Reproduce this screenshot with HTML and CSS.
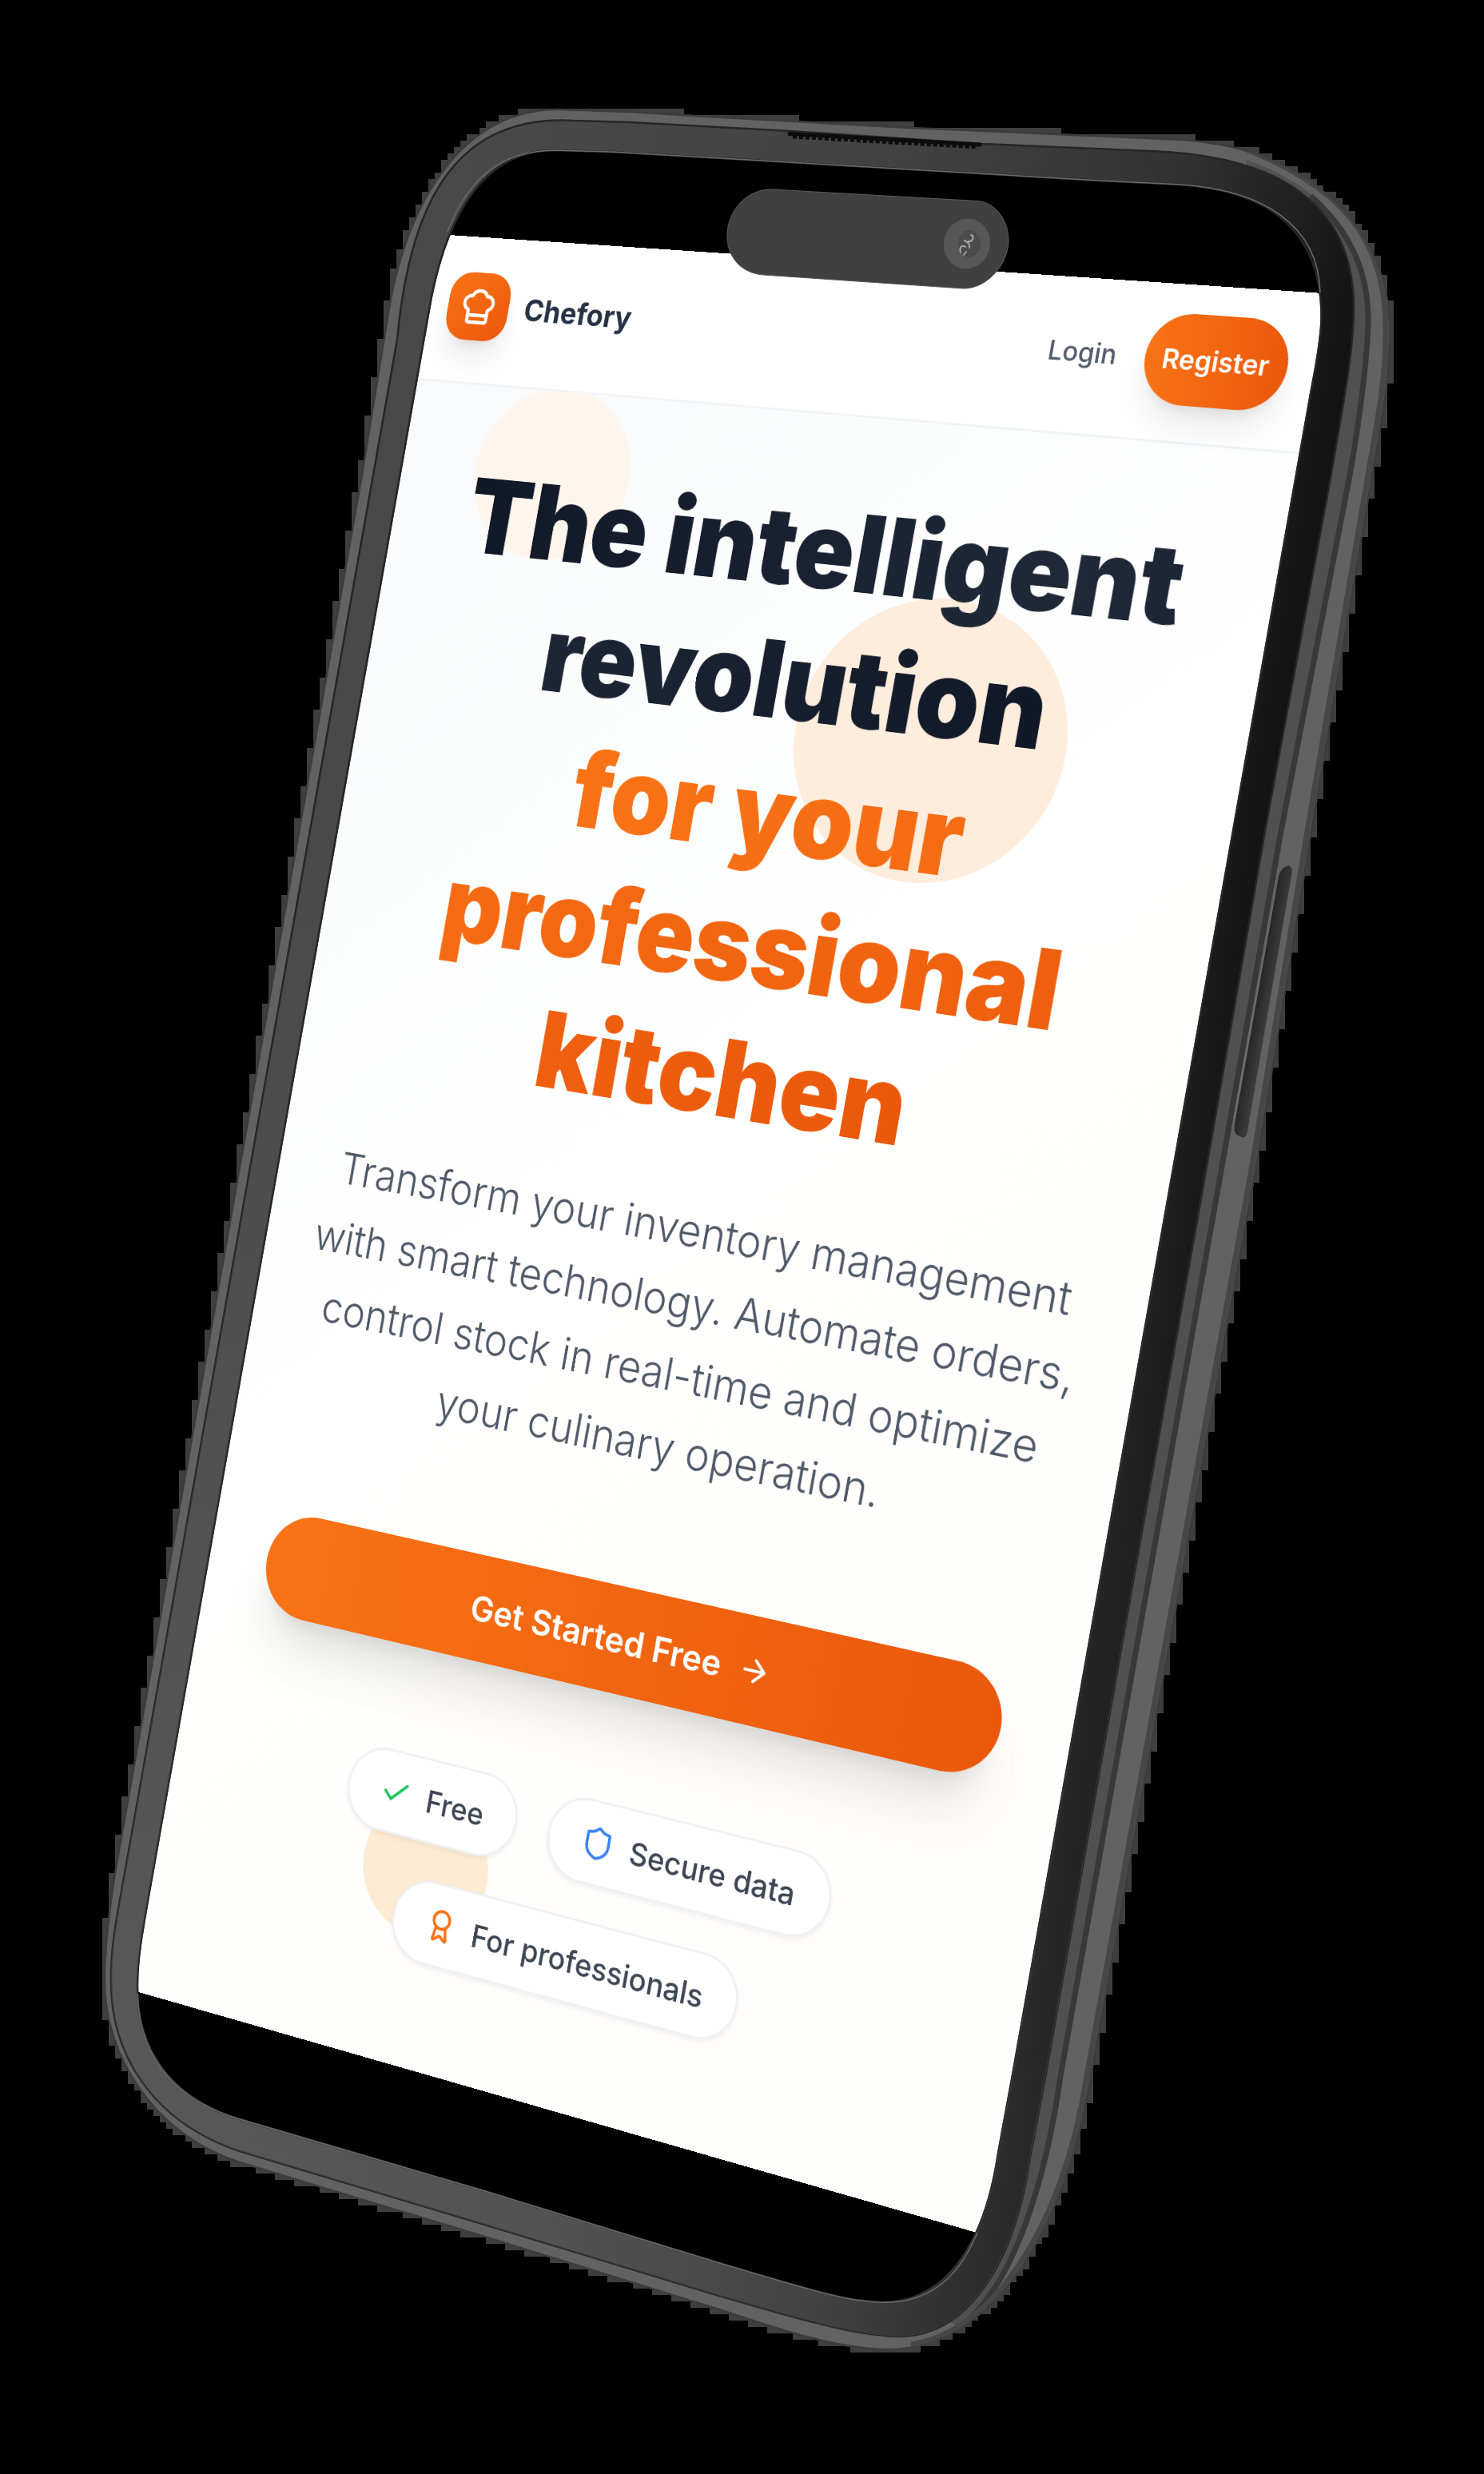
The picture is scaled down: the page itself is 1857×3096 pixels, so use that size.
FILE: index.html
```html
<!DOCTYPE html>
<html lang="en">
<head>
<meta charset="utf-8">
<title>Chefory</title>
<link rel="stylesheet" href="styles.css">
</head>
<body>
<main class="stage">
  <div class="screen">
    <header class="nav">
      <div class="brand">
        <span class="brand-mark">
          <svg class="icon-hat" viewBox="0 0 24 24"><path d="M17 21a1 1 0 0 0 1-1v-5.35c0-.457.316-.844.727-1.041a4 4 0 0 0-2.134-7.589 5 5 0 0 0-9.186 0 4 4 0 0 0-2.134 7.588c.411.198.727.585.727 1.041V20a1 1 0 0 0 1 1Z"/><path d="M6 17h12"/></svg>
        </span>
        <span class="brand-name">Chefory</span>
      </div>
      <nav class="actions">
        <a class="login">Login</a>
        <a class="register">Register</a>
      </nav>
    </header>
    <section class="hero">
      <i class="blob blob-a"></i>
      <i class="blob blob-b"></i>
      <i class="blob blob-c"></i>
      <h1 class="title"><span class="ink">The intelligent<br>revolution</span><br><span class="flame">for your<br>professional<br>kitchen</span></h1>
      <p class="lead">Transform your inventory management<br>with smart technology. Automate orders,<br>control stock in real-time and optimize<br>your culinary operation.</p>
      <a class="cta">Get Started Free
        <svg class="icon" viewBox="0 0 24 24"><path d="M5 12h14"/><path d="m12 5 7 7-7 7"/></svg>
      </a>
      <ul class="pills">
        <li class="pill"><svg class="icon green" viewBox="0 0 24 24"><path d="M20 6 9 17l-5-5"/></svg>Free</li>
        <li class="pill"><svg class="icon blue" viewBox="0 0 24 24"><path d="M20 13c0 5-3.500 7.500-7.660 8.950a1 1 0 0 1-.670-.010C7.500 20.500 4 18 4 13V6a1 1 0 0 1 1-1c2 0 4.500-1.200 6.240-2.720a1.170 1.170 0 0 1 1.520 0C14.510 3.810 17 5 19 5a1 1 0 0 1 1 1z"/></svg>Secure data</li>
        <li class="pill"><svg class="icon orange" viewBox="0 0 24 24"><path d="m15.477 12.890 1.515 8.526a.5.5 0 0 1-.810.470l-3.580-2.687a1 1 0 0 0-1.197 0l-3.586 2.686a.5.5 0 0 1-.810-.469l1.514-8.526"/><circle cx="12" cy="8" r="6"/></svg>For professionals</li>
      </ul>
    </section>
  </div>

  <svg class="phone" viewBox="0 0 1857 3096">
    <defs>
      <linearGradient id="bezel" gradientUnits="userSpaceOnUse" x1="587" y1="104" x2="1712" y2="303">
        <stop offset="0" stop-color="#494949"/>
        <stop offset=".5" stop-color="#414141"/>
        <stop offset=".78" stop-color="#323232"/>
        <stop offset=".93" stop-color="#1e1e1e"/>
        <stop offset="1" stop-color="#131313"/>
      </linearGradient>
      <linearGradient id="lift" gradientUnits="userSpaceOnUse" x1="0" y1="1000" x2="0" y2="2700">
        <stop offset="0" stop-color="#fff" stop-opacity="0"/>
        <stop offset="1" stop-color="#fff" stop-opacity=".09"/>
      </linearGradient>
      <linearGradient id="key" gradientUnits="userSpaceOnUse" x1="1570" y1="1250" x2="1592" y2="1254">
        <stop offset="0" stop-color="#222"/>
        <stop offset="1" stop-color="#404040"/>
      </linearGradient>
      <clipPath id="bodyClip"><path d="M452 600L484.600 400C505 260 575 136 700 137L788 140L886 146L1140 160L1368 170L1480 175C1640 185 1738 290 1739 410C1740 470 1730 520 1716 600L1641 1040L1571.700 1460L1364.700 2600C1330 2810 1230 2945 1103 2940C1040 2938 960 2910 900 2890L600 2797L300 2706C190 2670 131 2570 131 2480C130 2440 137 2390 143 2350Z"/></clipPath>
    </defs>
    <g id="fringe"></g>
    <path class="rim" d="M452 600L484.600 400C505 260 575 136 700 137L788 140L886 146L1140 160L1368 170L1480 175C1640 185 1738 290 1739 410C1740 470 1730 520 1716 600L1641 1040L1571.700 1460L1364.700 2600C1330 2810 1230 2945 1103 2940C1040 2938 960 2910 900 2890L600 2797L300 2706C190 2670 131 2570 131 2480C130 2440 137 2390 143 2350Z
      M190 2350L536 393C552 296 592 186 696 188L766 190L1140 212L1377 226L1460 230C1585 234 1654 285 1653.600 398C1653 430 1645 465 1640 493L1266.500 2600L1249 2695C1232 2810 1180 2896 1078 2879C1050 2876 1000 2862 900 2832L600 2740L300 2652C210 2625 172 2560 172 2490C171 2455 178 2417 190 2350Z"/>
    <g clip-path="url(#bodyClip)">
      <path class="channel" d="M1560 200C1670 240 1714 310 1714 400C1714 440 1703 530 1691 600L1606 1040L1532 1460L1329.700 2600C1310 2740 1270 2850 1200 2912L1168 2895C1235 2850 1262 2760 1290 2600L1563 1040L1643 600C1660 520 1673 440 1673 390C1672 300 1630 240 1560 212Z"/>
      <path class="channel-line" d="M1640 245C1690 290 1712 340 1712 400C1712 440 1701 530 1688 600L1603 1040L1529 1460L1326.700 2600C1307 2740 1267 2850 1215 2900"/>
      <path class="rim-edge" d="M1560 187C1680 235 1734 300 1734 410C1735 470 1725 520 1711 600L1636 1040L1566.700 1460L1359.700 2600C1330 2790 1240 2920 1140 2934"/>
    </g>
    <path class="key-hi" d="M1601 1095L1544 1400"/>
    <path class="key" d="M1600 1097C1602 1088 1609 1082 1614 1084C1618 1086 1617 1091 1616 1096L1562 1410C1561 1424 1556 1425 1552 1422C1545 1420 1544 1416 1545 1407Z"/>
    <path class="glass" d="M497 425C512 262 565 142 718 151L788 153L989 164L1229 180L1440 189C1600 195 1694 255 1694 385C1694 440 1680 510 1664.700 600L1583 1040L1510 1460L1308 2600L1289 2700C1270 2830 1210 2940 1100 2922C1050 2918 960 2890 900 2873L600 2782L300 2692C190 2655 139 2570 139 2480C138 2440 146 2400 155 2350L466 600Z
      M190 2350L536 393C552 296 592 186 696 188L766 190L1140 212L1377 226L1460 230C1585 234 1654 285 1653.600 398C1653 430 1645 465 1640 493L1266.500 2600L1249 2695C1232 2810 1180 2896 1078 2879C1050 2876 1000 2862 900 2832L600 2740L300 2652C210 2625 172 2560 172 2490C171 2455 178 2417 190 2350Z"/>
    <path class="lift" d="M497 425C512 262 565 142 718 151L788 153L989 164L1229 180L1440 189C1600 195 1694 255 1694 385C1694 440 1680 510 1664.700 600L1583 1040L1510 1460L1308 2600L1289 2700C1270 2830 1210 2940 1100 2922C1050 2918 960 2890 900 2873L600 2782L300 2692C190 2655 139 2570 139 2480C138 2440 146 2400 155 2350L466 600Z
      M190 2350L536 393C552 296 592 186 696 188L766 190L1140 212L1377 226L1460 230C1585 234 1654 285 1653.600 398C1653 430 1645 465 1640 493L1266.500 2600L1249 2695C1232 2810 1180 2896 1078 2879C1050 2876 1000 2862 900 2832L600 2740L300 2652C210 2625 172 2560 172 2490C171 2455 178 2417 190 2350Z"/>
    <path class="lip" d="M560 290C585 225 625 188 696 188L766 190L1140 212L1377 226L1460 230C1585 234 1650 285 1652 366M1223 2794C1200 2850 1160 2892 1078 2879C1050 2876 1000 2862 900 2832L600 2740L300 2652C210 2625 174 2565 172 2495"/>
    <path class="slot" d="M988 167.500L1226 181"/>
    <path class="slot-teeth" d="M992 171L1224 184"/>
    <path class="island" d="M966 237L1223 251.500C1247 253 1263 278 1262 303C1260 335 1232 362 1205 361L955 344C928 342 909 322 910 293C911 262 936 236 966 237Z"/>
    <ellipse class="lens" cx="1210" cy="305" rx="29" ry="31.500" transform="rotate(15 1210 305)"/>
    <ellipse class="lens-core" cx="1213" cy="305" rx="14" ry="17"/>
    <path class="glint" d="M1202 316C1200 309 1204 306 1208 309M1207 301C1211 303 1214 305 1213 310M1215 294C1220 296 1217 303 1212 302M1206 319L1209 315"/>
  </svg>
</main>
<script src="fringe.js"></script>
</body>
</html>
```
FILE: styles.css
```css
html { font-size: 48px; }
body { margin: 0; background: #000; }
.stage { position: relative; width: 1857px; height: 3096px; overflow: hidden; background: #000; }

/* The page is laid out flat and then tilted into the handset. */
.screen {
  position: absolute; left: 0; top: 0;
  width: 1290px; height: 2514px; overflow: hidden;
  display: flex; flex-direction: column;
  background: #fff; color: #111827;
  font-family: Inter, "Liberation Sans", sans-serif;
  transform-origin: 0 0;
  transform: matrix3d(.73589, .030078, 0, -.000074147, -.154574, .874423, 0, .0000002, 0, 0, 1, 0, 553.7, 293.5, 0, 1);
}

.nav {
  position: relative; z-index: 1; box-sizing: border-box; height: 4.33rem; flex: none;
  display: flex; align-items: center; justify-content: space-between;
  padding: 0 .76rem .19rem .61rem;
  background: #fff; border-bottom: .0625rem solid #f3f4f6;
}
.brand, .actions { display: flex; align-items: center; }
.brand { gap: .51rem; }
.brand-mark {
  width: 2rem; height: 2rem; border-radius: .7rem;
  display: flex; align-items: center; justify-content: center;
  background: linear-gradient(135deg, #f97316, #ea580c);
  box-shadow: 0 .625rem .9375rem -.1875rem rgba(0,0,0,.1), 0 .25rem .375rem -.25rem rgba(0,0,0,.1);
}
.icon-hat { width: 1.25rem; height: 1.25rem; fill: none; stroke: #fff; stroke-width: 2; stroke-linecap: round; stroke-linejoin: round; }
.brand-name { font-size: .875rem; font-weight: 700; color: #273244; }
.actions { gap: .8rem; }
.login { font-size: .75rem; font-weight: 500; color: #535d6b; }
.register {
  height: 2.5rem; padding: 0 .5rem; border-radius: 1.25rem;
  display: flex; align-items: center;
  font-size: .75rem; font-weight: 600; color: #fff;
  background: linear-gradient(90deg, #f97316, #ea580c);
  box-shadow: 0 .625rem .9375rem -.1875rem rgba(0,0,0,.1), 0 .25rem .375rem -.25rem rgba(0,0,0,.1);
}

.hero {
  flex: 1; display: flex; flex-direction: column; align-items: center;
  padding: 1.92rem 1.99rem 0 1.93rem; white-space: nowrap; text-align: center;
  background: linear-gradient(135deg, #f9fafb 0%, #fff 45%, #fffdfa 100%);
}
.blob { position: absolute; border-radius: 50%; }
.blob-a { left: 2.43rem; top: 4.22rem; width: 5rem; height: 5rem; background: #fef6ed; }
.blob-b { left: 13.88rem; top: 9.12rem; width: 8rem; height: 7.9rem; background: #feeddd; }
.blob-c { left: 6.72rem; top: 44.7rem; width: 4rem; height: 3.95rem; background: #feebd4; }

.title { position: relative; margin: 0; font-size: 3rem; line-height: 1.25; font-weight: 900; letter-spacing: 0; }
.ink, .flame { -webkit-background-clip: text; background-clip: text; color: transparent; }
.ink { background-image: linear-gradient(90deg, #111827, #1f2937, #111827); }
.flame { background-image: linear-gradient(90deg, #f97316, #ea580c); }
.lead { position: relative; margin: 1.47rem 0 0; font-size: 1.253rem; line-height: 1.625; font-weight: 300; color: #4f5967; }

.cta {
  position: relative; align-self: stretch; margin-top: 3.02rem; height: 3rem; border-radius: 1.5rem;
  display: flex; align-items: center; justify-content: center; gap: .5rem;
  font-size: 1rem; font-weight: 600; color: #fff;
  background: linear-gradient(90deg, #f97316, #ea580c);
  box-shadow: 0 1.25rem 1.5625rem -.3125rem rgba(0,0,0,.1), 0 .5rem .625rem -.375rem rgba(0,0,0,.1);
}
.icon { width: 1rem; height: 1rem; flex: none; fill: none; stroke: currentColor; stroke-width: 2; stroke-linecap: round; stroke-linejoin: round; }
.green { color: #22c55e; }
.blue { color: #3b82f6; }
.orange { color: #f97316; }

.pills {
  position: relative; list-style: none; margin: 3rem 0 0; padding: 0; width: 20rem;
  display: flex; flex-wrap: wrap; justify-content: center; gap: 1rem;
}
.pill {
  box-sizing: border-box; height: 2.375rem; padding: 0 1rem; border-radius: 1.2rem;
  display: flex; align-items: center; gap: .5rem;
  font-size: .88rem; font-weight: 500; color: #3d4654;
  background: #fff; border: .0625rem solid #f0f1f3;
  box-shadow: 0 .0625rem .125rem rgba(0,0,0,.06);
}

.phone { position: absolute; left: 0; top: 0; width: 1857px; height: 3096px; }
.rim { fill: #626262; fill-rule: evenodd; stroke: #3c3c3c; stroke-width: 2.5; }
.channel { fill: #505050; }
.channel-line { fill: none; stroke: #383838; stroke-width: 7; }
.rim-edge { fill: none; stroke: #474747; stroke-width: 7; }
.glass { fill: url(#bezel); fill-rule: evenodd; stroke: #262626; stroke-width: 2.5; }
.lift { fill: url(#lift); fill-rule: evenodd; }
.lip { fill: none; stroke: #6a6a6a; stroke-width: 1.5; }
.key { fill: url(#key); }
.key-hi { fill: none; stroke: #6e6e6e; stroke-width: 2; }
.slot { fill: none; stroke: #0c0c0c; stroke-width: 5; stroke-linecap: round; }
.slot-teeth { fill: none; stroke: #0c0c0c; stroke-width: 5; stroke-dasharray: 5 3; }
.island { fill: #404040; stroke: #5a5a5a; stroke-width: 1; }
.lens { fill: #575757; }
.lens-core { fill: #4b4b4b; }
.glint { fill: none; stroke: #a5a5a5; stroke-width: 2; stroke-linecap: round; }
.fringe-cell { fill: #3f3f3f; }
```
FILE: fringe.js
```js
// Stepped 8px fringe along the outside edge of the handset.
(function () {
  var NS = "http://www.w3.org/2000/svg";
  var group = document.getElementById("fringe");
  var source = document.querySelector("#bodyClip path");
  var path = document.createElementNS(NS, "path");
  path.setAttribute("d", source.getAttribute("d"));
  var total = path.getTotalLength();
  var seen = {};
  for (var s = 0; s < total; s += 2) {
    var p = path.getPointAtLength(s);
    var x = Math.floor(p.x / 8) * 8;
    var y = Math.floor(p.y / 8) * 8;
    var key = x + "," + y;
    if (seen[key]) continue;
    seen[key] = true;
    var cell = document.createElementNS(NS, "rect");
    cell.setAttribute("class", "fringe-cell");
    cell.setAttribute("x", x);
    cell.setAttribute("y", y);
    cell.setAttribute("width", 8);
    cell.setAttribute("height", 8);
    group.appendChild(cell);
  }
})();
```
